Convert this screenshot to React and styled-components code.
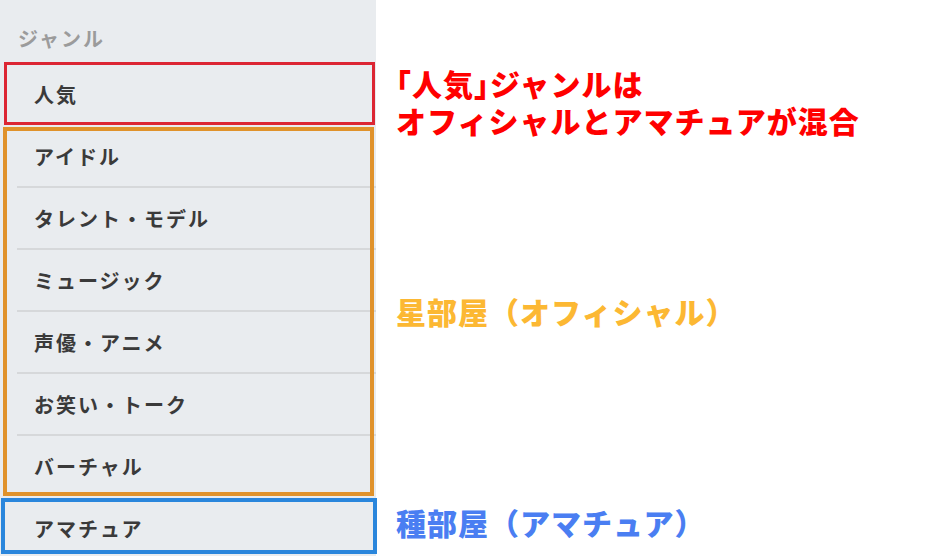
import React from "react";
import styled, { createGlobalStyle, css } from "styled-components";

const GlobalStyle = createGlobalStyle`
  html, body { margin: 0; padding: 0; background: #ffffff; }
  body { font-family: "Noto Sans CJK JP", "Noto Sans", sans-serif; }
  * { box-sizing: border-box; }
`;

const Page = styled.div`
  display: grid;
  grid-template-columns: 376px 1fr;
  grid-template-rows: 63px 62px 372px 62px;
  width: 939px;
  height: 556px;
  overflow: hidden;
  background: #ffffff;
`;

const Heading = styled.div`
  grid-column: 1;
  grid-row: 1;
  background: #e9ecef;
  padding: 24px 0 0 18px;
  font-size: 20px;
  line-height: 30px;
  font-weight: 700;
  letter-spacing: 2px;
  color: #9b9b9b;
`;

const frameColors = {
  red: "#dc2633",
  orange: "#e0922b",
  blue: "#2a86dc",
};

const Group = styled.div`
  grid-column: 1;
  grid-row: ${(p) => p.$row};
  position: relative;
  background: #e9ecef;
  display: flex;
  flex-direction: column;

  &::after {
    content: "";
    position: absolute;
    pointer-events: none;
    z-index: 2;
    border: ${(p) => p.$width}px solid ${(p) => frameColors[p.$tone]};
    ${(p) => css`
      top: ${p.$inset[0]}px;
      right: ${p.$inset[1]}px;
      bottom: ${p.$inset[2]}px;
      left: ${p.$inset[3]}px;
    `}
  }
`;

const Row = styled.div`
  position: relative;
  height: 62px;
  flex: none;
  margin-left: 17px;
  padding-left: 17px;
  display: flex;
  align-items: center;
  font-size: 20px;
  font-weight: 700;
  letter-spacing: 2px;
  color: #3a3a3a;

  & + &::before {
    content: "";
    position: absolute;
    left: 0;
    right: 0;
    top: -1px;
    height: 2px;
    background: #d6d8da;
  }
`;

const noteColors = {
  red: "#ff0000",
  orange: "#fcb833",
  blue: "#4a7ef2",
};

const Note = styled.div`
  grid-column: 2;
  grid-row: ${(p) => p.$row};
  align-self: ${(p) => p.$align};
  margin-top: ${(p) => p.$offset}px;
  padding-left: 20px;
  color: ${(p) => noteColors[p.$tone]};
  font-size: 30px;
  line-height: ${(p) => p.$lh}px;
  letter-spacing: 1px;
  font-weight: 900;
  white-space: nowrap;
`;

const Bracket = styled.span`
  font-feature-settings: "halt";
`;

const official = [
  "アイドル",
  "タレント・モデル",
  "ミュージック",
  "声優・アニメ",
  "お笑い・トーク",
  "バーチャル",
];

export default function App() {
  return (
    <>
      <GlobalStyle />
      <Page>
        <Heading>ジャンル</Heading>

        <Group $row={2} $tone="red" $width={3} $inset={[-1, 1, 0, 4]}>
          <Row>人気</Row>
        </Group>

        <Group $row={3} $tone="orange" $width={4} $inset={[2, 2, 1, 3]}>
          {official.map((name) => (
            <Row key={name}>{name}</Row>
          ))}
        </Group>

        <Group $row={4} $tone="blue" $width={4} $inset={[1, -1, 5, 1]}>
          <Row>アマチュア</Row>
        </Group>

        <Note $row={2} $align="start" $offset={2} $tone="red" $lh={37}>
          <Bracket>「</Bracket>人気<Bracket>」</Bracket>ジャンルは
          <br />
          オフィシャルとアマチュアが混合
        </Note>

        <Note $row={3} $align="center" $offset={0} $tone="orange" $lh={36}>
          星部屋（オフィシャル）
        </Note>

        <Note $row={4} $align="start" $offset={7} $tone="blue" $lh={36}>
          種部屋（アマチュア）
        </Note>
      </Page>
    </>
  );
}
